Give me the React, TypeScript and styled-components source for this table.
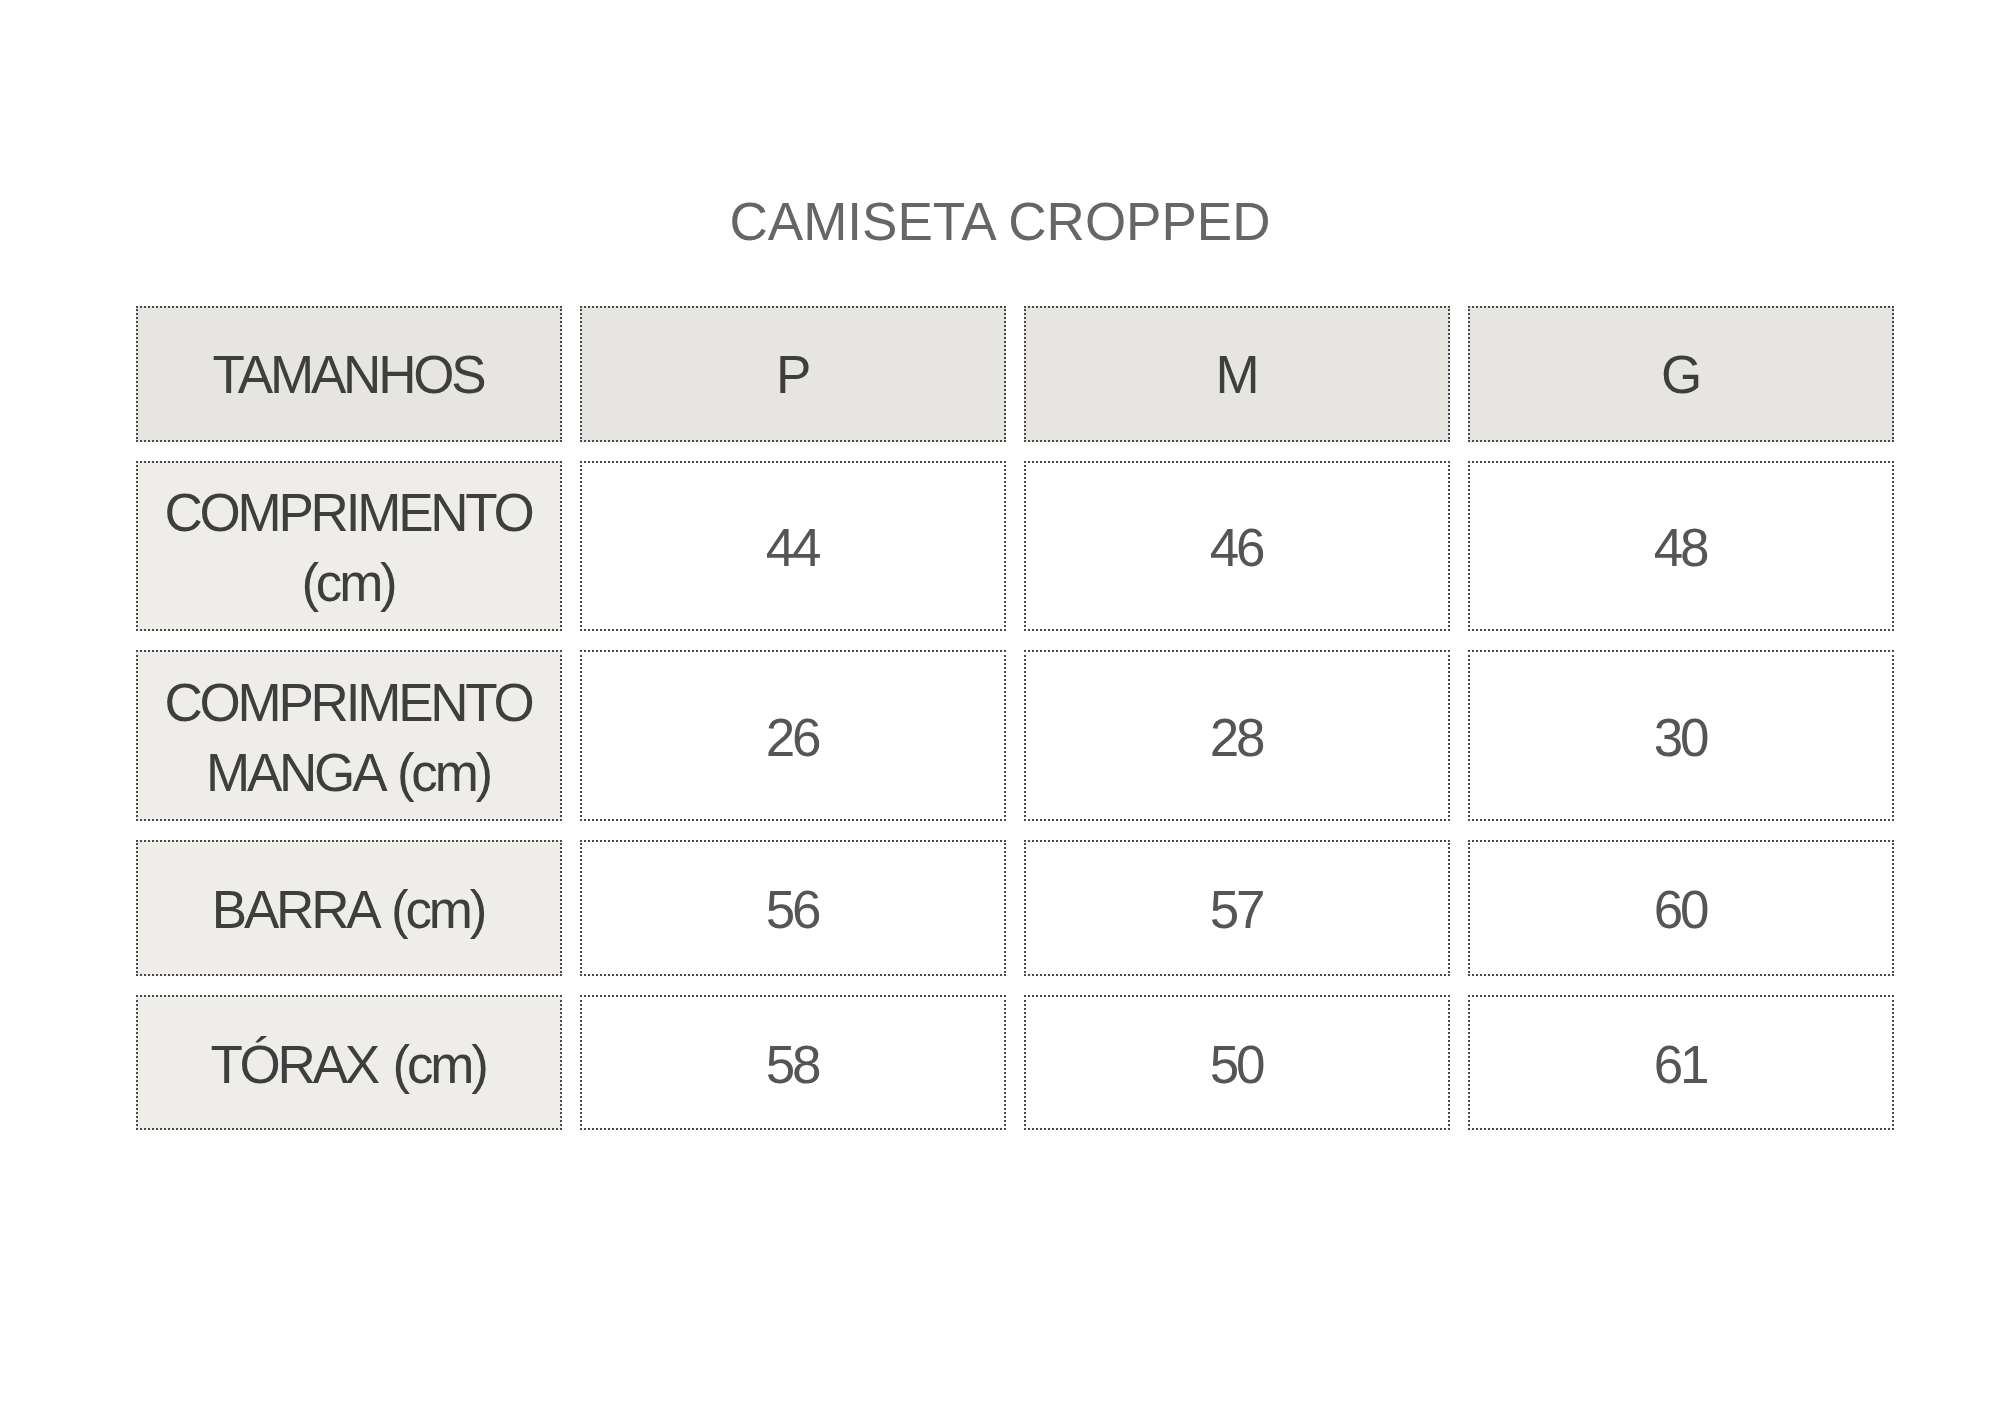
import React from 'react'
import styled, { createGlobalStyle } from 'styled-components'

const GlobalStyle = createGlobalStyle`
  html, body {
    margin: 0;
    padding: 0;
    background: #ffffff;
  }
  body {
    font-family: 'Liberation Sans', Arial, Helvetica, sans-serif;
  }
`

const Page = styled.div`
  width: 2000px;
  min-height: 1414px;
  padding-top: 192px;
  box-sizing: border-box;
`

const Title = styled.h1`
  margin: 0 0 54px;
  font-size: 53px;
  line-height: 60px;
  font-weight: 400;
  color: #666666;
  text-align: center;
`

const Table = styled.div`
  margin-left: 136px;
  display: grid;
  grid-template-columns: repeat(4, 426px);
  column-gap: 18px;
  row-gap: 19px;
`

type Variant = 'head' | 'label' | 'value'

const backgrounds: Record<Variant, string> = {
  head: '#e6e5e1',
  label: '#eeede9',
  value: '#ffffff',
}

const colors: Record<Variant, string> = {
  head: '#3e3e3e',
  label: '#3e3e3e',
  value: '#555555',
}

const Cell = styled.div<{ $variant: Variant; $height: number }>`
  height: ${(p) => p.$height}px;
  box-sizing: border-box;
  border: 2px dotted #4a4a4a;
  background: ${(p) => backgrounds[p.$variant]};
  color: ${(p) => colors[p.$variant]};
  display: flex;
  align-items: center;
  justify-content: center;
  text-align: center;
  font-size: 53px;
  line-height: 70px;
  letter-spacing: -3.2px;
  word-spacing: 4px;
  padding: ${(p) => (p.$variant === 'head' ? '1px' : '4px')} 2px 0 0;
`

const sizes = ['P', 'M', 'G']

const rows: { label: React.ReactNode; values: string[]; height: number }[] = [
  {
    label: (
      <>
        COMPRIMENTO
        <br />
        (cm)
      </>
    ),
    values: ['44', '46', '48'],
    height: 170,
  },
  {
    label: (
      <>
        COMPRIMENTO
        <br />
        MANGA (cm)
      </>
    ),
    values: ['26', '28', '30'],
    height: 171,
  },
  { label: 'BARRA (cm)', values: ['56', '57', '60'], height: 136 },
  { label: 'TÓRAX (cm)', values: ['58', '50', '61'], height: 135 },
]

const App = () => {
  return (
    <Page>
      <GlobalStyle />
      <Title>CAMISETA CROPPED</Title>
      <Table>
        <Cell $variant='head' $height={136}>
          TAMANHOS
        </Cell>
        {sizes.map((s) => (
          <Cell key={s} $variant='head' $height={136}>
            {s}
          </Cell>
        ))}
        {rows.map((row, i) => (
          <React.Fragment key={i}>
            <Cell $variant='label' $height={row.height}>
              <span>{row.label}</span>
            </Cell>
            {row.values.map((v, j) => (
              <Cell key={j} $variant='value' $height={row.height}>
                {v}
              </Cell>
            ))}
          </React.Fragment>
        ))}
      </Table>
    </Page>
  )
}

export default App
